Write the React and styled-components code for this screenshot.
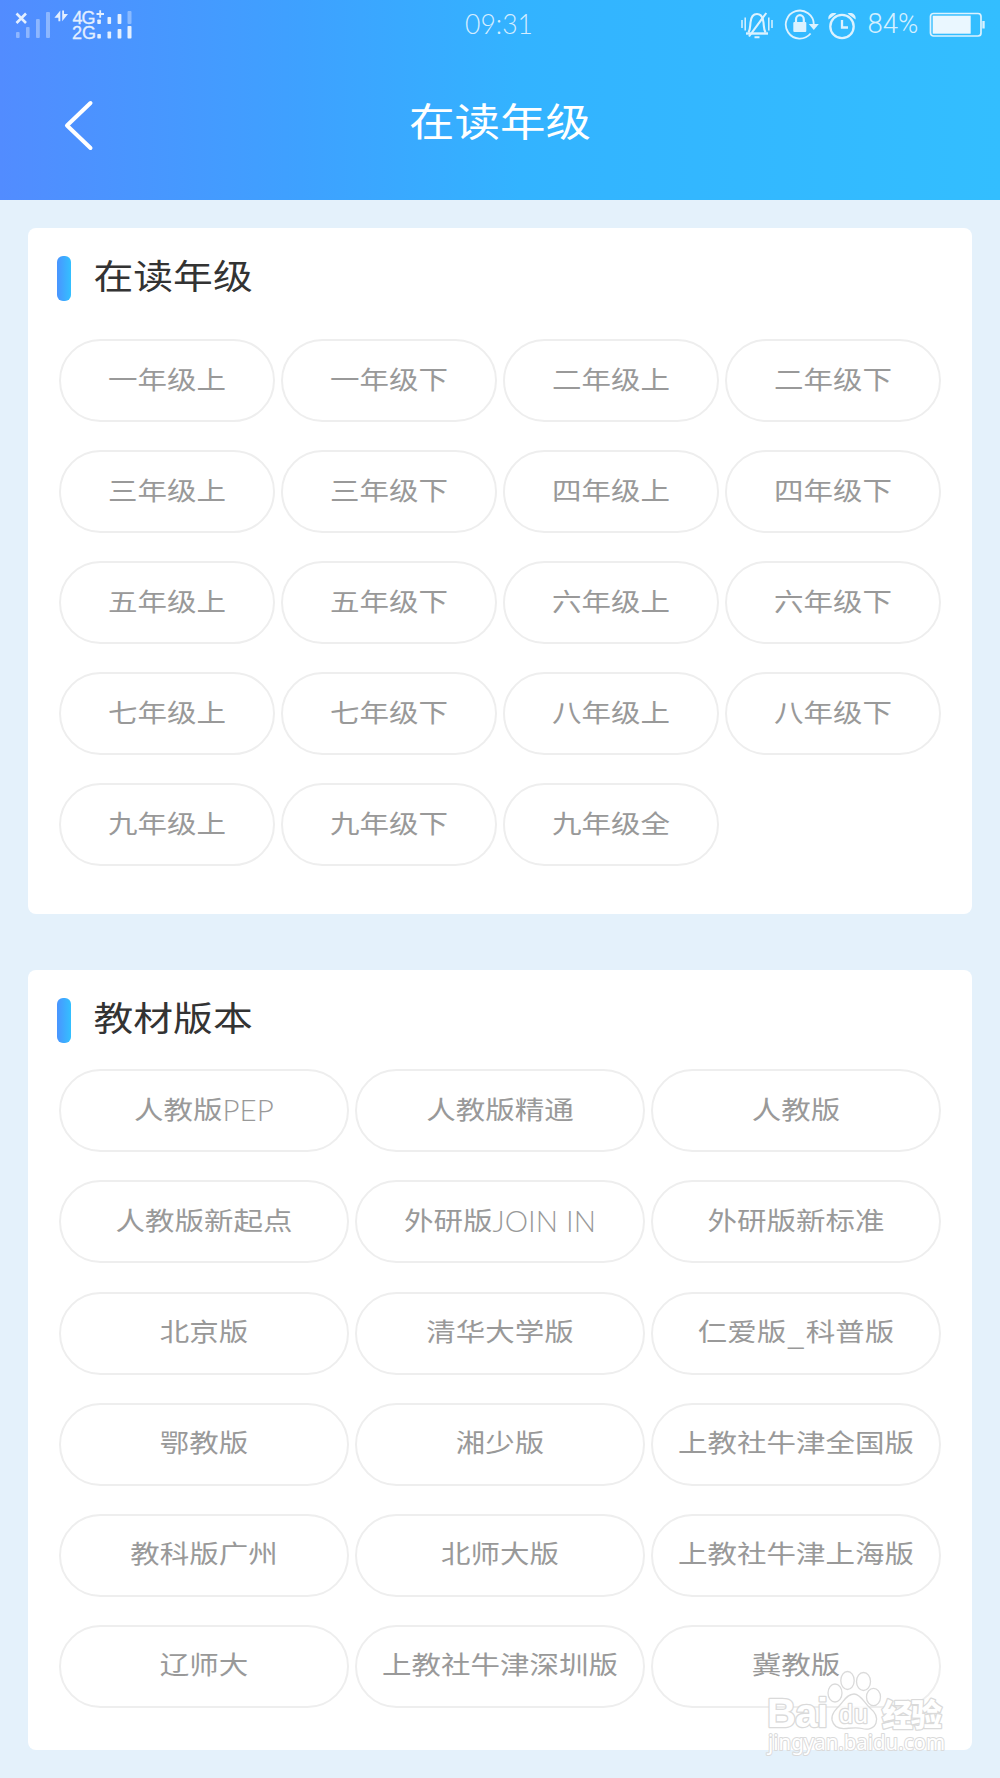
import React from 'react'
// style
import styled, { createGlobalStyle } from 'styled-components'

const grades = [
    '一年级上', '一年级下', '二年级上', '二年级下',
    '三年级上', '三年级下', '四年级上', '四年级下',
    '五年级上', '五年级下', '六年级上', '六年级下',
    '七年级上', '七年级下', '八年级上', '八年级下',
    '九年级上', '九年级下', '九年级全'
]

const editions = [
    '人教版PEP', '人教版精通', '人教版',
    '人教版新起点', '外研版JOIN IN', '外研版新标准',
    '北京版', '清华大学版', '仁爱版_科普版',
    '鄂教版', '湘少版', '上教社牛津全国版',
    '教科版广州', '北师大版', '上教社牛津上海版',
    '辽师大', '上教社牛津深圳版', '冀教版'
]

const SignalIcons = () => (
    <svg width="140" height="50" viewBox="0 0 140 50" fill="#e3efff">
        <path d="M16.5 13.5l9.5 9.5M26 13.5L16.5 23" stroke="#e3efff" strokeWidth="2.6" />
        <g opacity="0.42">
            <rect x="16" y="32" width="3.6" height="6" rx="1" />
            <rect x="26" y="27" width="3.6" height="11" rx="1" />
            <rect x="36" y="19" width="3.8" height="19" rx="1" />
            <rect x="46" y="12" width="4" height="26" rx="1" />
            <rect x="127.5" y="11" width="4" height="13" rx="1" />
        </g>
        <path d="M60.3 10.5v10.8h-1.9v-3.5h-4zM62.2 21.3V10.5H64v3.5h4z" />
        <text x="72.5" y="24" fontSize="18" textLength="23" stroke="#e3efff" strokeWidth="0.3">4G</text>
        <text x="72" y="38.5" fontSize="18" textLength="24" stroke="#e3efff" strokeWidth="0.3">2G</text>
        <path d="M96.5 14h7.5M100.2 10.3v7.5" stroke="#e3efff" strokeWidth="1.8" />
        <rect x="97.3" y="19.5" width="3.6" height="4.5" rx="0.8" />
        <rect x="107.5" y="17" width="3.6" height="7" rx="0.8" />
        <rect x="117.6" y="14" width="3.8" height="10" rx="0.8" />
        <rect x="97.3" y="34" width="3.6" height="4.5" rx="0.8" />
        <rect x="107.5" y="31.5" width="3.6" height="7" rx="0.8" />
        <rect x="117.6" y="29" width="3.8" height="9.5" rx="0.8" />
        <rect x="127.5" y="26" width="4" height="12.5" rx="0.8" />
    </svg>
)

const MutedBellIcon = () => (
    <svg width="34" height="32" viewBox="0 0 34 32" fill="none" stroke="#dcf2ff" strokeWidth="2.1">
        <path d="M2 11v8M5.2 8.5v13M28.8 8.5v13M32 11v8" strokeWidth="1.5" />
        <path d="M8.5 23.5c1.800-3 1.5-5.5 2-10C11 8 13 5 17 5s6 3 6.5 8.5c.5 4.5.2 7 2 10" />
        <path d="M14.5 28.3h5M26.3 4L9 27.5" />
        <path d="M6 24.500h22" strokeWidth="2.4" />
    </svg>
)

const LockIcon = () => (
    <svg width="35" height="32" viewBox="0 0 35 32" fill="none" stroke="#dcf2ff" strokeWidth="1.8">
        <path d="M26.600 24.5A14 14 0 1 1 29.8 15.5" />
        <path d="M24.8 15h10l-5 6z" fill="#dcf2ff" stroke="none" />
        <rect x="9.3" y="13" width="13" height="10" rx="1" fill="#dcf2ff" stroke="none" />
        <path d="M12 14v-3.5a3.9 4.3 0 0 1 7.8 0V14" strokeWidth="2.2" />
    </svg>
)

const AlarmIcon = () => (
    <svg width="30" height="32" viewBox="0 0 30 32" fill="none" stroke="#dcf2ff" strokeWidth="2.3">
        <circle cx="14" cy="17.5" r="11.7" />
        <path d="M14 11v7.5h6" />
        <path d="M0.5 10.5C-0.5 6 3.5 3 8.5 4.5zM27.5 10.5c1-4.5-3-7.5-8-6z" fill="#dcf2ff" stroke="none" />
    </svg>
)

const BatteryIcon = () => (
    <svg width="56" height="26" viewBox="0 0 56 26" fill="none">
        <rect x="1.5" y="1.5" width="50.5" height="22.5" rx="3" stroke="#dcf2ff" strokeWidth="1.7" />
        <rect x="3.7" y="3.7" width="38" height="18" fill="#eaf7ff" />
        <path d="M54.5 9v7.5" stroke="#dcf2ff" strokeWidth="2.4" />
    </svg>
)

const BackIcon = () => (
    <svg width="30" height="52" viewBox="0 0 30 52" fill="none" stroke="#fff" strokeWidth="4" strokeLinecap="round" strokeLinejoin="round">
        <path d="M26.5 4L3 26.5L26.5 49" />
    </svg>
)

const Watermark = () => (
    <StyledWatermark>
        <svg width="190" height="94" viewBox="760 1666 190 94" fill="#fff" stroke="#dadada" strokeWidth="1.3">
            <g fillOpacity="0.75">
                <ellipse cx="835" cy="1693" rx="7" ry="9" />
                <ellipse cx="847.5" cy="1680.5" rx="6.7" ry="9" />
                <ellipse cx="863.5" cy="1681.5" rx="7" ry="9" />
                <ellipse cx="873.5" cy="1697" rx="7" ry="8.7" />
                <path d="M854 1694c-7 0-10 7-14 11s-9 9-8 15c2 8 9 9 14 8.500s11-1.500 16 0 12 .5 14-5.500c2-6-1-11-6-15s-9-14-16-14z" />
            </g>
            <g paintOrder="stroke" strokeLinejoin="round" strokeWidth="2.6">
                <text x="767" y="1727" fontSize="40" fontWeight="700" textLength="61">Bai</text>
                <text x="839" y="1722.5" fontSize="25" fontWeight="400" textLength="29">du</text>
                <text x="882" y="1725.5" fontSize="31" fontWeight="900" textLength="60">经验</text>
                <StyledSite x="768" y="1749.5" fontSize="21" textLength="177" lengthAdjust="spacingAndGlyphs" strokeWidth="2">jingyan.baidu.com</StyledSite>
            </g>
        </svg>
    </StyledWatermark>
)

// latin runs are thinner and taller than the characters around them
const Label = ({ text }) => {
    return (
        <StyledLabel>
            {text.split(/([A-Z_ ]+)/).filter(Boolean).map((part, index) => {
                if (part === '_') return <StyledUnderscore key={index}>{part}</StyledUnderscore>
                return (/[A-Z]/.test(part)) ? <StyledLatin key={index}>{part}</StyledLatin> : <span key={index}>{part}</span>
            })}
        </StyledLabel>
    )
}

const OptionCard = ({ title, options, columns, titleGap }) => {
    return (
        <StyledCard>
            <StyledCardTitle $gap={titleGap}>
                <StyledMarker />
                <h2>{title}</h2>
            </StyledCardTitle>
            <StyledOptions $columns={columns}>
                {options.map((option) => (
                    <StyledOption key={option}><Label text={option} /></StyledOption>
                ))}
            </StyledOptions>
        </StyledCard>
    )
}

const App = () => {
    return (
        <StyledPage>
            <GlobalStyle />
            <StyledHeader>
                <StyledStatusBar>
                    <SignalIcons />
                    <StyledClock>09:31</StyledClock>
                    <StyledStatusIcons>
                        <MutedBellIcon />
                        <LockIcon />
                        <AlarmIcon />
                        <StyledPercent>84%</StyledPercent>
                        <BatteryIcon />
                    </StyledStatusIcons>
                </StyledStatusBar>
                <StyledNav>
                    <StyledBack aria-label="返回"><BackIcon /></StyledBack>
                    <h1>在读年级</h1>
                </StyledNav>
            </StyledHeader>
            <StyledContent>
                <OptionCard title="在读年级" options={grades} columns={4} titleGap={38} />
                <OptionCard title="教材版本" options={editions} columns={3} titleGap={26.4} />
            </StyledContent>
            <Watermark />
        </StyledPage>
    )
}

const GlobalStyle = createGlobalStyle`
    * {
        box-sizing: border-box;
    }

    body {
        margin: 0;
        background: #e4f1fb;
        font-family: Lato, "Noto Sans CJK SC", sans-serif;
    }

    h1, h2 {
        margin: 0;
        font-weight: 400;
    }

    svg {
        display: block;
        flex-shrink: 0;
        font-family: "Liberation Sans", "Noto Sans CJK SC", sans-serif;
    }
`

const StyledPage = styled.div`
    position: relative;
    width: 1000px;
    height: 1778px;
    overflow: hidden;
`

const StyledHeader = styled.header`
    height: 200px;
    background: linear-gradient(90deg, #528cff 0%, #3ea1ff 30%, #33b3ff 52%, #33beff 100%);
    color: #fff;
`

const StyledStatusBar = styled.div`
    display: grid;
    grid-template-columns: 1fr auto 1fr;
    height: 50px;
`

const StyledClock = styled.span`
    width: 72px;
    padding-right: 2px;
    color: #d5edff;
    font-size: 26.5px;
    font-weight: 300;
    line-height: 49px;
    text-align: center;
`

const StyledStatusIcons = styled.div`
    display: flex;
    align-items: center;
    justify-content: flex-end;
    padding-right: 15px;
    gap: 9.5px;
`

const StyledPercent = styled.span`
    width: 52px;
    color: #d5f0ff;
    font-family: Roboto, sans-serif;
    font-size: 27.5px;
    font-weight: 300;
    line-height: 44px;
    padding-bottom: 2px;
`

const StyledNav = styled.div`
    display: grid;
    grid-template-columns: 140px 1fr 140px;
    align-items: center;
    height: 150px;

    h1 {
        font-size: 45.5px;
        line-height: 60px;
        text-align: center;
        transform: scaleY(0.86);
        margin-bottom: 8px;
    }
`

const StyledBack = styled.button`
    margin: 0 0 0 64px;
    padding: 0;
    border: 0;
    background: none;
    width: 30px;
`

const StyledContent = styled.main`
    display: flex;
    flex-direction: column;
    gap: 56px;
    padding: 28px 28px 0;
`

const StyledCard = styled.section`
    padding: 28px 31px 0;
    background: #fff;
    border-radius: 8px;

    &:first-child {
        height: 686px;
    }

    &:last-child {
        height: 780px;
    }
`

const StyledCardTitle = styled.div`
    display: flex;
    align-items: center;
    gap: 23px;
    height: 45px;
    margin: 0 0 ${({ $gap }) => $gap}px -2.5px;

    h2 {
        color: #333;
        font-size: 39.8px;
        line-height: 45px;
        transform: scaleY(0.86);
        margin-bottom: 6px;
    }
`

const StyledMarker = styled.span`
    width: 14px;
    height: 45px;
    border-radius: 6px;
    background: linear-gradient(90deg, #4a94ff, #33c0ff);
`

const StyledOptions = styled.div`
    display: grid;
    grid-template-columns: repeat(${({ $columns }) => $columns}, 1fr);
    grid-auto-rows: 83px;
    gap: 28.1px 6.3px;
`

const StyledOption = styled.button`
    padding: 0 0 6px;
    border: 2px solid #eee;
    border-radius: 42px;
    background: #fff;
    color: #999;
    font-family: inherit;
    font-size: 29.5px;
    font-weight: 400;
    white-space: nowrap;
`

const StyledLabel = styled.span`
    display: block;
    transform: scaleY(0.86);
`

const StyledLatin = styled.span`
    display: inline-block;
    font-weight: 300;
    white-space: pre;
    transform: translateY(1px) scaleY(1.13);
`

const StyledUnderscore = styled.span`
    display: inline-block;
    padding: 0 3px;
    transform: translateY(4px) scaleX(1.4);
`

const StyledSite = styled.text`
    font-family: "Noto Sans", sans-serif;
`

const StyledWatermark = styled.div`
    position: absolute;
    left: 760px;
    top: 1666px;
    pointer-events: none;
`

export default App
